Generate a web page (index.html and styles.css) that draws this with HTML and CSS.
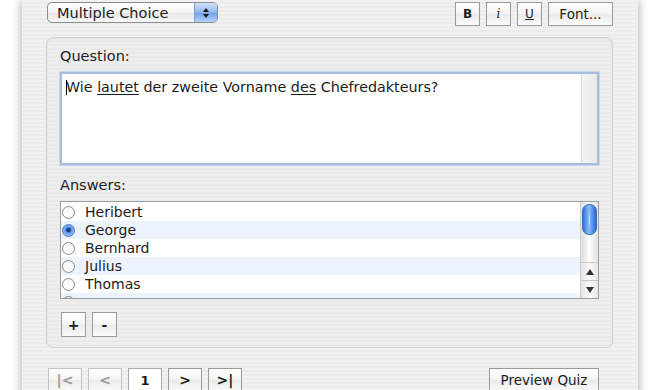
FILE: index.html
```html
<!DOCTYPE html>
<html lang="de">
<head>
    <meta charset="UTF-8">
    <title>Quiz Editor</title>
    <link rel="stylesheet" href="styles.css">
</head>
<body>
    <div class="window">
        <div class="toolbar">
            <div class="popup">
                <span>Multiple Choice</span>
                <span class="stepper">
                    <svg width="8" height="12" viewBox="0 0 8 12"><path d="M4 1 L7 5 L1 5 Z M4 11 L7 7 L1 7 Z" fill="#1a1a1a"/></svg>
                </span>
            </div>
            <div class="format">
                <button class="bevel small bold">B</button>
                <button class="bevel small italic">i</button>
                <button class="bevel small under">U</button>
                <button class="bevel font">Font...</button>
            </div>
        </div>

        <div class="group">
            <div class="label">Question:</div>
            <div class="question">
                <div class="qtext"><span class="caret"></span>Wie <u>lautet</u> der zweite Vorname <u>des</u> Chefredakteurs?</div>
                <div class="qscroll"></div>
            </div>

            <div class="label answers-label">Answers:</div>
            <div class="answers">
                <ul class="rows">
                    <li><span class="radio"></span>Heribert</li>
                    <li><span class="radio on"></span>George</li>
                    <li><span class="radio"></span>Bernhard</li>
                    <li><span class="radio"></span>Julius</li>
                    <li><span class="radio"></span>Thomas</li>
                    <li><span class="radio"></span></li>
                </ul>
                <div class="scroll">
                    <div class="thumb"><span class="grip"></span></div>
                    <div class="track"></div>
                    <div class="arrow"><svg width="8" height="6" viewBox="0 0 8 6"><path d="M4 0 L8 6 L0 6 Z" fill="#333"/></svg></div>
                    <div class="arrow"><svg width="8" height="6" viewBox="0 0 8 6"><path d="M0 0 L8 0 L4 6 Z" fill="#333"/></svg></div>
                </div>
            </div>

            <div class="addremove">
                <button class="bevel square">+</button>
                <button class="bevel square">-</button>
            </div>
        </div>

        <div class="nav">
            <div class="pager">
                <button class="bevel step dim">|&lt;</button>
                <button class="bevel step dim">&lt;</button>
                <div class="page">1</div>
                <button class="bevel step">&gt;</button>
                <button class="bevel step">&gt;|</button>
            </div>
            <button class="bevel preview">Preview Quiz</button>
        </div>
    </div>
</body>
</html>
```

FILE: styles.css
```css
body {
    margin: 0;
    background: #ffffff;
    font-family: "DejaVu Sans", "Liberation Sans", sans-serif;
    font-size: 14px;
    color: #1c1c1c;
    overflow: hidden;
}

.window {
    margin-left: 22px;
    width: 616px;
    height: 400px;
    box-sizing: border-box;
    padding: 2px 25px 0 25px;
    background: repeating-linear-gradient(#f1f1f1 0 2px, #ebebeb 2px 4px);
    box-shadow: -3px 0 8px rgba(0, 0, 0, 0.18), 3px 0 8px rgba(0, 0, 0, 0.18);
}

.toolbar {
    display: flex;
    justify-content: space-between;
    align-items: flex-start;
    height: 35px;
}

.popup {
    width: 171px;
    height: 21px;
    box-sizing: border-box;
    display: flex;
    align-items: center;
    justify-content: space-between;
    padding-left: 9px;
    border: 1px solid #8c8c8c;
    border-radius: 5px;
    background: linear-gradient(#ffffff, #f4f4f4 50%, #e6e6e6 51%, #f7f7f7);
    font-size: 14.5px;
    overflow: hidden;
}

.stepper {
    width: 22px;
    height: 100%;
    display: flex;
    align-items: center;
    justify-content: center;
    background: linear-gradient(#cfe2fb, #8fb7ee 50%, #6b9fe6 51%, #b4d3fb);
    border-left: 1px solid #7e9fcb;
}

.format {
    display: flex;
    gap: 6px;
}

.bevel {
    font-family: inherit;
    font-size: 13.5px;
    color: #1c1c1c;
    border: 1px solid #9a9a9a;
    border-radius: 0;
    background: linear-gradient(#ffffff, #f3f3f3 50%, #eaeaea 51%, #fafafa);
    padding: 0;
    height: 24px;
    box-sizing: border-box;
}

.small {
    width: 25px;
    font-size: 12px;
}

.bold {
    font-weight: bold;
}

.italic {
    font-style: italic;
    font-family: "DejaVu Serif", serif;
}

.under {
    text-decoration: underline;
}

.font {
    width: 65px;
}

.group {
    margin-left: -1px;
    height: 311px;
    box-sizing: border-box;
    padding: 10px 13px 0 13px;
    border: 1px solid #d0d0d0;
    border-radius: 7px;
    background: repeating-linear-gradient(#eeeeee 0 2px, #e9e9e9 2px 4px);
    box-shadow: inset 0 1px 2px rgba(0, 0, 0, 0.06);
}

.label {
    height: 24px;
    line-height: 16px;
    color: #222;
    font-size: 14.5px;
}

.question {
    height: 93px;
    box-sizing: border-box;
    display: flex;
    border: 2px solid #a6bedb;
    box-shadow: 0 0 0 1px #c7d6ea;
    background: #ffffff;
}

.qtext {
    flex: 1;
    padding: 5px 4px;
    font-size: 14.3px;
    line-height: 16px;
}

.qtext u {
    text-decoration-thickness: 1px;
    text-underline-offset: 2px;
}

.caret {
    display: inline-block;
    width: 1px;
    height: 15px;
    background: #000;
    vertical-align: -3px;
    margin-right: -1px;
}

.qscroll {
    width: 15px;
    background: linear-gradient(90deg, #f4f4f4, #e9e9e9);
    border-left: 1px solid #dddddd;
}

.answers-label {
    margin-top: 12px;
}

.answers {
    height: 98px;
    box-sizing: border-box;
    display: flex;
    border: 1px solid #9d9d9d;
    background: #ffffff;
    overflow: hidden;
}

.rows {
    flex: 1;
    list-style: none;
    margin: 0;
    padding: 1px 0 0 0;
}

.rows li {
    height: 18px;
    display: flex;
    align-items: center;
    font-size: 14px;
}

.rows li:nth-child(even) {
    background: #edf3fe;
}

.radio {
    width: 11px;
    height: 11px;
    border: 1px solid #8a8a8a;
    border-radius: 50%;
    background: linear-gradient(#f6f6f6, #ffffff);
    margin: 0 10px 0 1px;
}

.radio.on {
    border-color: #4a74b8;
    background: radial-gradient(circle at 50% 45%, #1d3f80 0 2px, #4e8be6 2.6px, #9cc4f7 6px);
}

.scroll {
    width: 17px;
    display: flex;
    flex-direction: column;
    border-left: 1px solid #cccccc;
    background: linear-gradient(90deg, #e4e4e4, #fafafa 50%, #e6e6e6);
}

.thumb {
    margin: 2px 1px 0 1px;
    height: 29px;
    border-radius: 7px;
    border: 1px solid #3d6fc0;
    background: linear-gradient(90deg, #2f6fd6, #8dbdf7 45%, #5b98ec 70%, #2c67c8);
    display: flex;
    align-items: center;
    justify-content: center;
}

.grip {
    width: 1px;
    height: 10px;
    background: rgba(255, 255, 255, 0.6);
}

.track {
    flex: 1;
    background: linear-gradient(90deg, #dcdcdc, #ffffff 50%, #e2e2e2);
    border-radius: 0 0 7px 7px;
    margin: 0 1px;
}

.arrow {
    height: 17px;
    display: flex;
    align-items: center;
    justify-content: center;
    border-top: 1px solid #c6c6c6;
}

.addremove {
    display: flex;
    gap: 6px;
    margin-top: 13px;
    padding-left: 1px;
}

.square {
    width: 25px;
    height: 25px;
    font-weight: bold;
    font-size: 14px;
}

.nav {
    display: flex;
    justify-content: space-between;
    margin-top: 20px;
    padding-right: 14px;
}

.pager {
    display: flex;
    gap: 6px;
    padding-left: 1px;
}

.step {
    width: 34px;
    font-weight: bold;
    font-size: 14px;
}

.step.dim {
    color: #9a9a9a;
    border-color: #c2c2c2;
}

.page {
    width: 34px;
    height: 24px;
    box-sizing: border-box;
    border: 1px solid #a9a9a9;
    background: #ffffff;
    display: flex;
    align-items: center;
    justify-content: center;
    font-weight: bold;
    font-size: 13px;
}

.preview {
    width: 110px;
}
```
